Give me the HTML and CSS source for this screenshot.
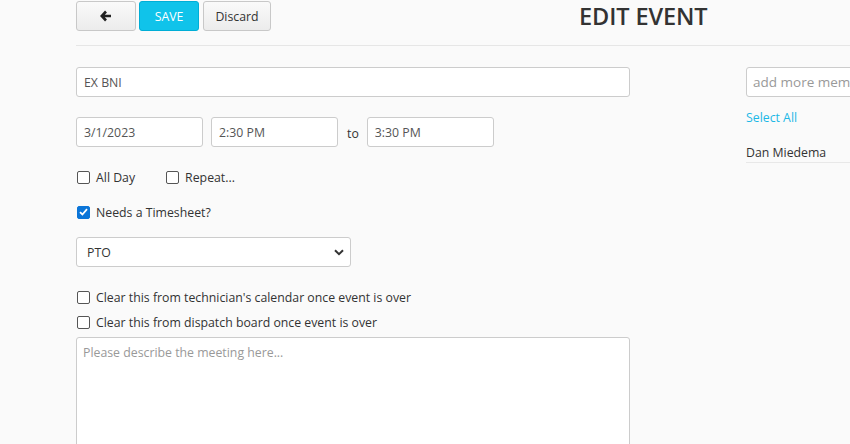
FILE: index.html
```html
<!DOCTYPE html>
<html>
<head>
<meta charset="utf-8">
<link rel="stylesheet" href="styles.css">
</head>
<body>
<div class="page">
  <header class="topbar">
    <div class="btns">
      <button class="btn btn-back" aria-label="Back">
        <svg width="12" height="12" viewBox="0 0 12 12"><path d="M6 1.5 L1.8 6 L6 10.5 M2 6 H11" fill="none" stroke="#222" stroke-width="2.6" stroke-linejoin="miter"/></svg>
      </button>
      <button class="btn btn-save">SAVE</button>
      <button class="btn btn-discard">Discard</button>
    </div>
    <h1 class="title">EDIT EVENT</h1>
  </header>
  <div class="content">
    <div class="main">
      <input class="field field-title" type="text" value="EX BNI">
      <div class="daterow">
        <input class="field field-sm" type="text" value="3/1/2023">
        <input class="field field-sm" type="text" value="2:30 PM">
        <span class="to">to</span>
        <input class="field field-sm" type="text" value="3:30 PM">
      </div>
      <div class="checkrow">
        <label class="chk"><span class="box"></span>All Day</label>
        <label class="chk"><span class="box"></span>Repeat...</label>
      </div>
      <div class="checkrow">
        <label class="chk"><span class="box checked"><svg width="9" height="8" viewBox="0 0 9 8"><path d="M1 4.2 L3.4 6.5 L8 1.2" fill="none" stroke="#fff" stroke-width="1.8"/></svg></span>Needs a Timesheet?</label>
      </div>
      <div class="select">
        <span>PTO</span>
        <svg width="10" height="7" viewBox="0 0 10 7"><path d="M1 1.3 L5 5.2 L9 1.3" fill="none" stroke="#333" stroke-width="2"/></svg>
      </div>
      <div class="clears">
        <label class="chk"><span class="box"></span>Clear this from technician's calendar once event is over</label>
        <label class="chk"><span class="box"></span>Clear this from dispatch board once event is over</label>
      </div>
      <textarea class="desc" placeholder="Please describe the meeting here..."></textarea>
    </div>
    <aside class="side">
      <input class="field field-members" type="text" placeholder="add more members">
      <a class="selall">Select All</a>
      <div class="member">Dan Miedema</div>
    </aside>
  </div>
</div>
</body>
</html>
```

FILE: styles.css
```css
html, body {
  margin: 0;
  padding: 0;
  background: #fafafa;
  overflow: hidden;
}
body {
  font-family: "Open Sans", "Noto Sans", sans-serif;
  font-size: 12.3px;
  color: #333;
}
.page {
  width: 850px;
  height: 444px;
  overflow: hidden;
  padding-left: 76px;
  box-sizing: border-box;
}
.topbar {
  display: flex;
  align-items: flex-start;
  height: 46px;
  border-bottom: 1px solid #e6e6e6;
  box-sizing: border-box;
  padding-top: 1px;
}
.btns {
  display: flex;
  gap: 3px;
}
.btn {
  height: 30px;
  border-radius: 3px;
  font-family: inherit;
  font-size: 12.3px;
  padding: 0;
  display: flex;
  align-items: center;
  justify-content: center;
  box-sizing: border-box;
}
.btn-back {
  width: 60px;
  border: 1px solid #c8c8c8;
  background: linear-gradient(#fafafa, #ececec);
}
.btn-save {
  width: 60px;
  border: 1px solid #00aed6;
  background: #10c3ea;
  color: #fff;
}
.btn-discard {
  width: 68px;
  margin-left: 1px;
  border: 1px solid #c8c8c8;
  background: linear-gradient(#fafafa, #ececec);
  color: #333;
}
.title {
  margin: 0 0 0 308px;
  font-size: 23.5px;
  font-weight: 600;
  color: #333;
  line-height: 30px;
  letter-spacing: -0.1px;
}
.content {
  display: flex;
  padding-top: 21px;
}
.main {
  width: 554px;
  display: flex;
  flex-direction: column;
}
.field {
  height: 30px;
  box-sizing: border-box;
  border: 1px solid #ccc;
  border-radius: 3px;
  background: #fff;
  font-family: inherit;
  font-size: 12.3px;
  color: #555;
  padding: 0 7px;
  outline: none;
}
.field-title {
  width: 554px;
}
.daterow {
  display: flex;
  align-items: center;
  margin-top: 20px;
}
.field-sm {
  width: 127px;
  height: 30px;
  margin-right: 8px;
}
.to {
  margin: 2px 8px 0 1px;
  color: #333;
}
.checkrow {
  display: flex;
  margin-top: 21px;
}
.checkrow + .checkrow {
  margin-top: 17px;
}
.chk {
  display: flex;
  align-items: center;
  height: 18px;
  margin-right: 30px;
  white-space: nowrap;
}
.box {
  width: 13px;
  height: 13px;
  box-sizing: border-box;
  border: 1px solid #555;
  border-radius: 2px;
  background: #fff;
  margin: 0 6px 0 1px;
  display: flex;
  align-items: center;
  justify-content: center;
}
.box.checked {
  background: #0b75d8;
  border-color: #0b75d8;
}
.select {
  margin-top: 16px;
  width: 275px;
  height: 30px;
  box-sizing: border-box;
  border: 1px solid #ccc;
  border-radius: 3px;
  background: #fff;
  display: flex;
  align-items: center;
  justify-content: space-between;
  padding: 0 6px 0 10px;
}
.clears {
  margin-top: 21px;
  display: flex;
  flex-direction: column;
  gap: 7px;
}
.desc {
  margin-top: 6px;
  width: 554px;
  height: 120px;
  flex-shrink: 0;
  box-sizing: border-box;
  border: 1px solid #ccc;
  border-radius: 3px;
  background: #fff;
  font-family: inherit;
  font-size: 12.3px;
  padding: 6px 6px;
  resize: none;
  outline: none;
}
.desc::placeholder, .field::placeholder {
  color: #999;
}
.side {
  margin-left: 116px;
  display: flex;
  flex-direction: column;
  width: 120px;
  flex-shrink: 0;
}
.field-members {
  width: 140px;
  font-size: 13.5px;
  padding-left: 6px;
}
.selall {
  margin-top: 12px;
  color: #1cb8e6;
  line-height: 18px;
}
.member {
  margin-top: 17px;
  line-height: 18px;
  border-bottom: 1px solid #e8e8e8;
  color: #333;
  width: 140px;
}
```
